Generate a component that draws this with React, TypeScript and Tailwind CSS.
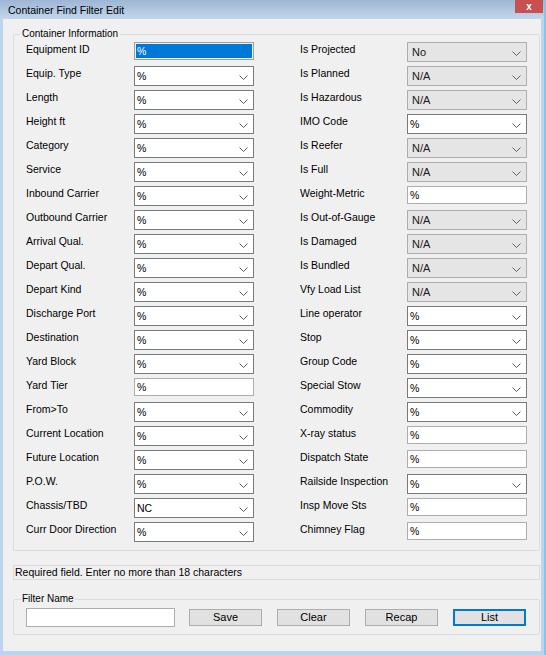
import React from 'react';

type Kind = 'text' | 'select' | 'disabled' | 'selected';
type Field = [string, Kind, string];

const LEFT: Field[] = [
  ['Equipment ID', 'selected', '%'],
  ['Equip. Type', 'select', '%'],
  ['Length', 'select', '%'],
  ['Height ft', 'select', '%'],
  ['Category', 'select', '%'],
  ['Service', 'select', '%'],
  ['Inbound Carrier', 'select', '%'],
  ['Outbound Carrier', 'select', '%'],
  ['Arrival Qual.', 'select', '%'],
  ['Depart Qual.', 'select', '%'],
  ['Depart Kind', 'select', '%'],
  ['Discharge Port', 'select', '%'],
  ['Destination', 'select', '%'],
  ['Yard Block', 'select', '%'],
  ['Yard Tier', 'text', '%'],
  ['From>To', 'select', '%'],
  ['Current Location', 'select', '%'],
  ['Future Location', 'select', '%'],
  ['P.O.W.', 'select', '%'],
  ['Chassis/TBD', 'select', 'NC'],
  ['Curr Door Direction', 'select', '%'],
];

const RIGHT: Field[] = [
  ['Is Projected', 'disabled', 'No'],
  ['Is Planned', 'disabled', 'N/A'],
  ['Is Hazardous', 'disabled', 'N/A'],
  ['IMO Code', 'select', '%'],
  ['Is Reefer', 'disabled', 'N/A'],
  ['Is Full', 'disabled', 'N/A'],
  ['Weight-Metric', 'text', '%'],
  ['Is Out-of-Gauge', 'disabled', 'N/A'],
  ['Is Damaged', 'disabled', 'N/A'],
  ['Is Bundled', 'disabled', 'N/A'],
  ['Vfy Load List', 'disabled', 'N/A'],
  ['Line operator', 'select', '%'],
  ['Stop', 'select', '%'],
  ['Group Code', 'select', '%'],
  ['Special Stow', 'select', '%'],
  ['Commodity', 'select', '%'],
  ['X-ray status', 'text', '%'],
  ['Dispatch State', 'text', '%'],
  ['Railside Inspection', 'select', '%'],
  ['Insp Move Sts', 'text', '%'],
  ['Chimney Flag', 'text', '%'],
];

const Chevron = () => (
  <svg width="9" height="5" viewBox="0 0 9 5" className="absolute right-[5px] top-[8px]">
    <polyline points="0.5,0.5 4.5,4.5 8.5,0.5" fill="none" stroke="#5f5f5f" strokeWidth="1" />
  </svg>
);

const Control = ({ kind, value }: { kind: Kind; value: string }) => {
  if (kind === 'selected') {
    return (
      <div className="w-[120px] h-[18px] border border-[#a0a0a0] p-px">
        <div className="h-full bg-[#0078d7] text-white text-[10.5px] leading-[14px] pl-[1px]">{value}</div>
      </div>
    );
  }
  if (kind === 'text') {
    return (
      <div className="w-[120px] h-[18px] border border-[#abadb3] bg-white text-[10.5px] leading-[16px] pl-[2px]">
        {value}
      </div>
    );
  }
  if (kind === 'disabled') {
    return (
      <div className="relative w-[120px] h-[20px] border border-[#adadad] bg-[#e5e5e5] text-[11px] leading-[18px] pl-[4px] text-[#1a1a1a]">
        {value}
        <Chevron />
      </div>
    );
  }
  return (
    <div className="relative w-[120px] h-[20px] border border-[#7a7a7a] bg-white text-[10.5px] leading-[18px] pl-[2px]">
      {value}
      <Chevron />
    </div>
  );
};

const Column = ({ fields, labelWidth }: { fields: Field[]; labelWidth: string }) => (
  <div className="flex flex-col">
    {fields.map(([label, kind, value]) => (
      <div key={label} className="flex items-start h-[24px]">
        <div className={`${labelWidth} text-[10.5px] leading-[13px] pt-[1px]`}>{label}</div>
        <Control kind={kind} value={value} />
      </div>
    ))}
  </div>
);

const Button = ({ label, primary }: { label: string; primary?: boolean }) => (
  <div
    className={
      primary
        ? 'w-[73px] h-[17px] border-2 border-[#0078d7] bg-[#e1e1e1] flex items-center justify-center text-[11px]'
        : 'w-[73px] h-[17px] border border-[#adadad] bg-[#e1e1e1] flex items-center justify-center text-[11px]'
    }
  >
    {label}
  </div>
);

export default function App() {
  return (
    <div className="w-[546px] h-[655px] flex flex-col bg-[#bcd4ee] border-r-2 border-[#79c9f0] text-black font-['Liberation_Sans',Arial,sans-serif]">
      <div className="relative h-[19px] shrink-0 bg-linear-to-b from-[#9db6d5] to-[#c3d6eb]">
        <div className="pl-[8px] pt-[3px] text-[10.5px] leading-[14px]">Container Find Filter Edit</div>
        <div className="absolute top-0 right-[1px] w-[28px] h-[13px] bg-[#c75050] flex items-center justify-center text-white text-[10px] font-bold leading-none">
          x
        </div>
      </div>

      <div className="flex-1 ml-[3px] mr-[3px] mb-[4px] bg-[#f0f0f0] flex flex-col">
        <fieldset className="mt-[9px] ml-[10px] mr-[1px] border border-[#dcdcdc] rounded-[2px] pl-[12px] pt-[2px] pb-[4px]">
          <legend className="-ml-[6px] px-[2px] text-[10px] leading-[12px]">Container Information</legend>
          <div className="flex gap-[46px]">
            <Column fields={LEFT} labelWidth="w-[108px]" />
            <Column fields={RIGHT} labelWidth="w-[107px]" />
          </div>
        </fieldset>

        <div className="mt-[14px] ml-[10px] mr-[1px] h-[15px] border border-[#dadada] text-[10.5px] leading-[13px] pl-[1px]">
          Required field. Enter no more than 18 characters
        </div>

        <fieldset className="mt-[13px] ml-[10px] mr-[1px] border border-[#dcdcdc] rounded-[2px] pl-[12px] pt-[3px] pb-[7px]">
          <legend className="-ml-[5px] px-[1px] text-[10px] leading-[12px]">Filter Name</legend>
          <div className="flex items-center">
            <div className="w-[149px] h-[19px] border border-[#abadb3] bg-white" />
            <div className="ml-[14px] flex gap-[15px]">
              <Button label="Save" />
              <Button label="Clear" />
              <Button label="Recap" />
              <Button label="List" primary />
            </div>
          </div>
        </fieldset>
      </div>
    </div>
  );
}
